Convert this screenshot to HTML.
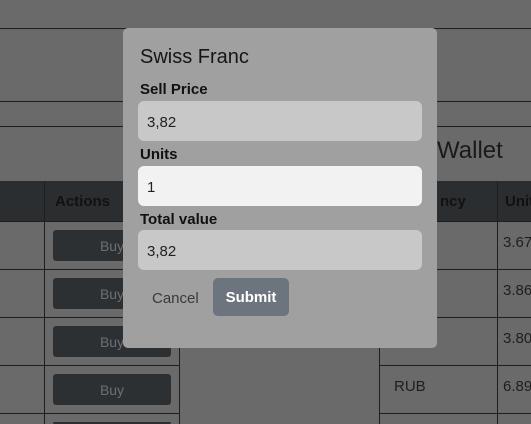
<!DOCTYPE html>
<html style="width:531px;height:424px;overflow:hidden"><head><meta charset="utf-8"><style>
*{box-sizing:border-box;margin:0;padding:0}
body{width:531px;height:424px;overflow:hidden;background:#6a6a6a;font-family:"Segoe UI","Liberation Sans",sans-serif;position:relative}
.a{position:absolute}
.hl{position:absolute;height:1px;background:#1e1e1e}
.vl{position:absolute;width:1px;background:#1e1e1e}
.hdr{position:absolute;background:#2b2e31;height:41px;top:181px}
.buy{position:absolute;left:53px;width:118px;height:31px;background:#2d3033;border-radius:3px;color:#6b7075;font-size:14px;text-align:center;line-height:33px}
.td{position:absolute;font-size:15px;color:#1e1e1e}
.modal{position:absolute;left:123px;top:28px;width:314px;height:320px;background:#a0a0a0;border-radius:5px}
.lbl{position:absolute;left:17px;font-weight:bold;font-size:15px;color:#111}
.inp{position:absolute;left:15px;width:284px;height:40px;border-radius:6px;font-size:15px;color:#222;padding-left:9px;line-height:43px}
</style></head><body>
<div class="hl" style="left:0;width:531px;top:28px"></div>
<div class="hl" style="left:0;width:531px;top:101px"></div>
<div class="hl" style="left:0;width:531px;top:126px"></div>
<div class="a" style="left:437px;top:137px;font-size:24px;color:#1a1a1a">Wallet</div>
<div class="hdr" style="left:0;width:179px"></div>
<div class="hdr" style="left:379px;width:152px"></div>
<div class="a" style="left:55px;top:193px;font-weight:bold;font-size:15px;color:#111">Actions</div>
<div class="a" style="left:440px;top:193px;font-weight:bold;font-size:15px;color:#111">ncy</div>
<div class="a" style="left:505px;top:193px;font-weight:bold;font-size:15px;color:#111">Unit</div>
<div class="hl" style="left:0;width:179px;top:221px"></div>
<div class="hl" style="left:0;width:179px;top:269px"></div>
<div class="hl" style="left:0;width:179px;top:317px"></div>
<div class="hl" style="left:0;width:179px;top:365px"></div>
<div class="hl" style="left:0;width:179px;top:413px"></div>
<div class="hl" style="left:379px;width:152px;top:221px"></div>
<div class="hl" style="left:379px;width:152px;top:269px"></div>
<div class="hl" style="left:379px;width:152px;top:317px"></div>
<div class="hl" style="left:379px;width:152px;top:365px"></div>
<div class="hl" style="left:379px;width:152px;top:413px"></div>
<div class="vl" style="left:44px;top:181px;height:243px"></div>
<div class="vl" style="left:179px;top:181px;height:243px"></div>
<div class="vl" style="left:379px;top:181px;height:243px"></div>
<div class="vl" style="left:497px;top:181px;height:243px"></div>
<div class="buy" style="top:230px">Buy</div>
<div class="buy" style="top:278px">Buy</div>
<div class="buy" style="top:326px">Buy</div>
<div class="buy" style="top:374px">Buy</div>
<div class="buy" style="top:422px;height:2px"></div>
<div class="td" style="left:394px;top:378px">RUB</div>
<div class="td" style="left:503px;top:234px">3.67</div>
<div class="td" style="left:503px;top:282px">3.86</div>
<div class="td" style="left:503px;top:330px">3.80</div>
<div class="td" style="left:503px;top:378px">6.89</div>
<div class="modal">
<div class="a" style="left:17px;top:18px;font-size:20px;color:#151515">Swiss Franc</div>
<div class="lbl" style="top:53px">Sell Price</div>
<div class="inp" style="top:73px;background:#c8c8c8">3,82</div>
<div class="lbl" style="top:118px">Units</div>
<div class="inp" style="top:138px;background:#f2f2f2">1</div>
<div class="lbl" style="top:183px">Total value</div>
<div class="inp" style="top:202px;background:#c8c8c8">3,82</div>
<div class="a" style="left:29px;top:262px;font-size:15px;color:#3a3a3a">Cancel</div>
<div class="a" style="left:90px;top:250px;width:76px;height:38px;background:#6c757d;border-radius:5px;color:#fff;font-size:15px;font-weight:600;text-align:center;line-height:40px">Submit</div>
</div>
</body></html>
